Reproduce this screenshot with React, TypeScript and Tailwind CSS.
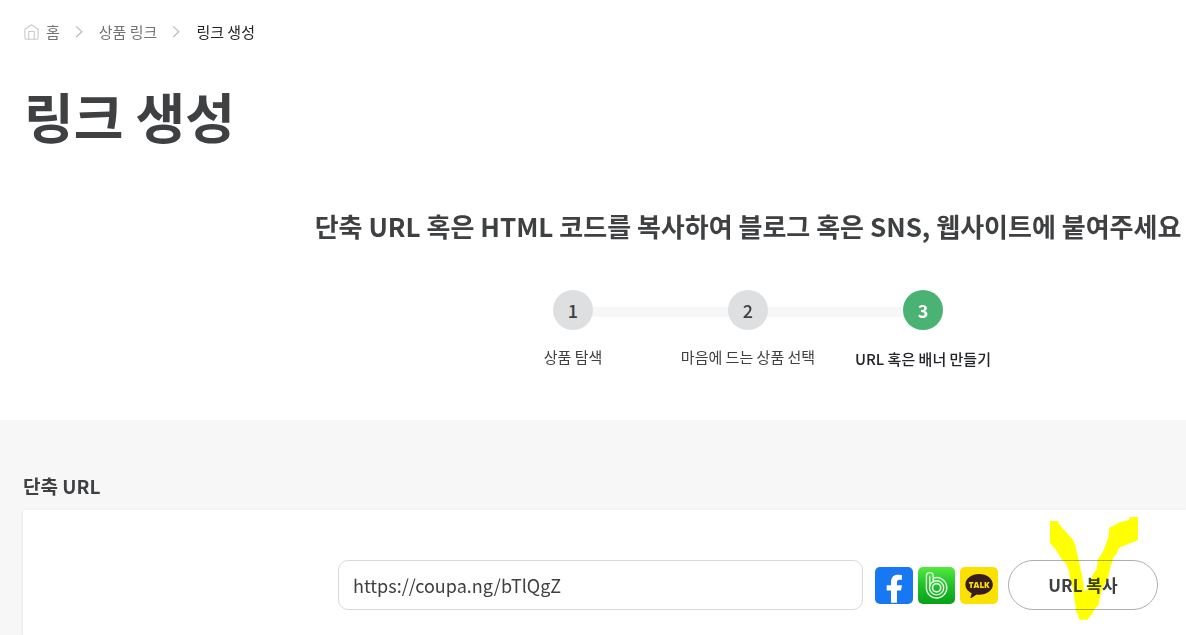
import { useState } from "react";

function HomeIcon() {
  return (
    <svg className="h-4 w-4" viewBox="0 0 16 16" fill="none" stroke="#c8cacc" strokeWidth="1.1" strokeLinejoin="round" aria-hidden="true">
      <path d="M.9 5.2 7.500 .7l6.600 4.500v8.800a1.200 1.200 0 0 1-1.200 1.200H2.100A1.200 1.200 0 0 1 .9 14z" />
      <path d="M4.700 15.200V7.500h5.600v7.700" />
    </svg>
  );
}

function Chevron() {
  return (
    <svg className="h-3 w-2" viewBox="0 0 8 12" fill="none" stroke="#b9bbbe" strokeWidth="1.2" aria-hidden="true">
      <path d="M1.200 .4 6.800 5.700 1.200 11" />
    </svg>
  );
}

function FacebookIcon() {
  return (
    <svg className="h-[37px] w-[38px]" viewBox="0 0 38 37" aria-hidden="true">
      <rect width="38" height="37" rx="5" fill="#1877f2" />
      <path
        fill="#fff"
        d="M16 35.7V23.500h-4.300v-5.200H16v-3.100c0-4.900 2.700-7.400 7-7.400 1.700 0 3.900.3 3.900.3v4.700h-2.100c-2.200 0-2.800 1.200-2.800 2.600v2.900h4.900l-.8 5.200H22v12.200z"
      />
    </svg>
  );
}

function BandIcon() {
  return (
    <svg className="h-[37px] w-[37px]" viewBox="0 0 37 37" fill="none" aria-hidden="true">
      <defs>
        <linearGradient id="band" x1="0" y1="0" x2="0" y2="1">
          <stop offset="0" stopColor="#53ea3f" />
          <stop offset="0.5" stopColor="#20bf2b" />
          <stop offset="1" stopColor="#07a018" />
        </linearGradient>
      </defs>
      <rect width="37" height="37" rx="5" fill="url(#band)" />
      <g stroke="#e4fbe2" strokeWidth="1.4">
        <path d="M8.400 20.800V9a3.400 3.400 0 0 1 6.800 0v2.200a10.200 10.200 0 1 1-6.800 9.600z" />
        <path d="M15.200 11.200v4.300" />
        <path d="M11.800 8.800V19" />
        <circle cx="18.600" cy="20.800" r="7.100" />
        <circle cx="18.600" cy="20.800" r="4.100" strokeWidth="1.700" />
      </g>
    </svg>
  );
}

function KakaoIcon() {
  return (
    <svg className="h-[37px] w-[38px]" viewBox="0 0 38 37" aria-hidden="true">
      <rect width="38" height="37" rx="5" fill="#fae100" />
      <path
        fill="#371d1e"
        d="M19.200 7C11.600 7 5.400 11.600 5.400 17.500c0 3.700 2.500 6.900 6.300 8.700l-1.200 4.200c-.2.600.3.900.8.600l5.300-3.400c.8.100 1.700.2 2.600.2 7.600 0 13.700-4.500 13.700-10.300S26.800 7 19.200 7z"
      />
      <text x="19.200" y="20.600" textAnchor="middle" fontFamily="Open Sans, sans-serif" fontSize="8" fontWeight="800" fill="#fae100">
        TALK
      </text>
    </svg>
  );
}

function Highlight() {
  return (
    <svg
      className="pointer-events-none absolute -top-[43px] left-[42px] h-[103px] w-[88px] mix-blend-multiply"
      viewBox="30 21 264 309"
      aria-hidden="true"
    >
      <path
        fill="#ff0"
        d="M30 33H53L60 46L98 88L106 105L111 130L117 155L124 188L130 215L132 246L144 234L150 212L160 192L170 178L174 148L187 128L198 103L206 78L208 53L240 37L267 30L270 21H294V90L286 94L262 103L236 114L231 128L219 144L216 158L210 174L206 196L196 220L186 240L180 262L176 285L163 297L159 308L142 329H118L115 315L108 305L106 282L101 250L95 218L89 200L87 182L77 160L64 147L50 123L30 98Z"
      />
    </svg>
  );
}

const steps = [
  { label: "상품 탐색", active: false },
  { label: "마음에 드는 상품 선택", active: false },
  { label: "URL 혹은 배너 만들기", active: true },
];

export default function App() {
  const [url, setUrl] = useState("https://coupa.ng/bTlQgZ");

  return (
    <div className="flex min-h-screen flex-col overflow-x-hidden bg-white font-['Noto_Sans_CJK_KR','Noto_Sans',sans-serif] text-[#3e4042]">
      <header className="px-6 pt-5">
        <nav aria-label="breadcrumb">
          <ol className="flex items-center text-[15px] leading-6 text-[#6f7276]">
            <li>
              <a href="#home" className="flex items-center gap-1.5">
                <HomeIcon />홈
              </a>
            </li>
            <li className="flex items-center">
              <span className="pr-4 pl-[15px]"><Chevron /></span>
              <a href="#products">상품 링크</a>
            </li>
            <li className="flex items-center text-[#212326]">
              <span className="pr-4 pl-[15px]"><Chevron /></span>
              <span aria-current="page">링크 생성</span>
            </li>
          </ol>
        </nav>
        <h1 className="mt-8 text-[54px] leading-20 font-bold">링크 생성</h1>
      </header>

      <section className="flex flex-col items-center pt-[50px] pb-[49px] pl-[310px]">
        <h2 className="text-[26px] leading-10 font-bold whitespace-nowrap">
          단축 URL 혹은 HTML 코드를 복사하여 블로그 혹은 SNS, 웹사이트에 붙여주세요
        </h2>
        <ol className="mt-11 flex">
          {steps.map((step, i) => (
            <li key={step.label} className="relative flex w-[175px] flex-col items-center gap-[15px]">
              {i > 0 && <span className="absolute top-[17px] right-1/2 h-2.5 w-full bg-[#f7f7f7]" />}
              <span
                className={
                  step.active
                    ? "relative z-10 flex h-10 w-10 items-center justify-center rounded-full bg-[#4ab374] text-lg font-bold text-white"
                    : "relative z-10 flex h-10 w-10 items-center justify-center rounded-full bg-[#dddfe1] text-lg font-medium"
                }
              >
                {i + 1}
              </span>
              <span
                className={
                  step.active
                    ? "pt-0.5 text-[15px] leading-6 font-medium whitespace-nowrap text-[#212326]"
                    : "text-[15px] leading-6 whitespace-nowrap"
                }
              >
                {step.label}
              </span>
            </li>
          ))}
        </ol>
      </section>

      <section className="flex grow flex-col bg-[#f7f7f7] pt-12 pl-[23px]">
        <h3 className="text-[19px] leading-9 font-bold">
          <label htmlFor="short-url">단축 URL</label>
        </h3>
        <div className="mt-1.5 flex grow items-start justify-center bg-white pt-[50px] pl-[287px] shadow-sm">
          <input
            id="short-url"
            type="text"
            value={url}
            onChange={(e) => setUrl(e.target.value)}
            className="h-[50px] w-[525px] min-w-0 rounded-[10px] border border-[#d8d9db] bg-white px-3.5 text-lg outline-none"
          />
          <div className="ml-3 flex h-[50px] shrink-0 items-center gap-[5px]">
            <button type="button" aria-label="Facebook"><FacebookIcon /></button>
            <button type="button" aria-label="Band"><BandIcon /></button>
            <button type="button" aria-label="KakaoTalk"><KakaoIcon /></button>
          </div>
          <div className="relative ml-2.5 shrink-0">
            <button
              type="button"
              onClick={() => navigator.clipboard?.writeText(url)}
              className="h-[50px] w-[150px] rounded-full border border-[#acaeb0] bg-white text-[17px] font-bold"
            >
              URL 복사
            </button>
            <Highlight />
          </div>
        </div>
      </section>
    </div>
  );
}
